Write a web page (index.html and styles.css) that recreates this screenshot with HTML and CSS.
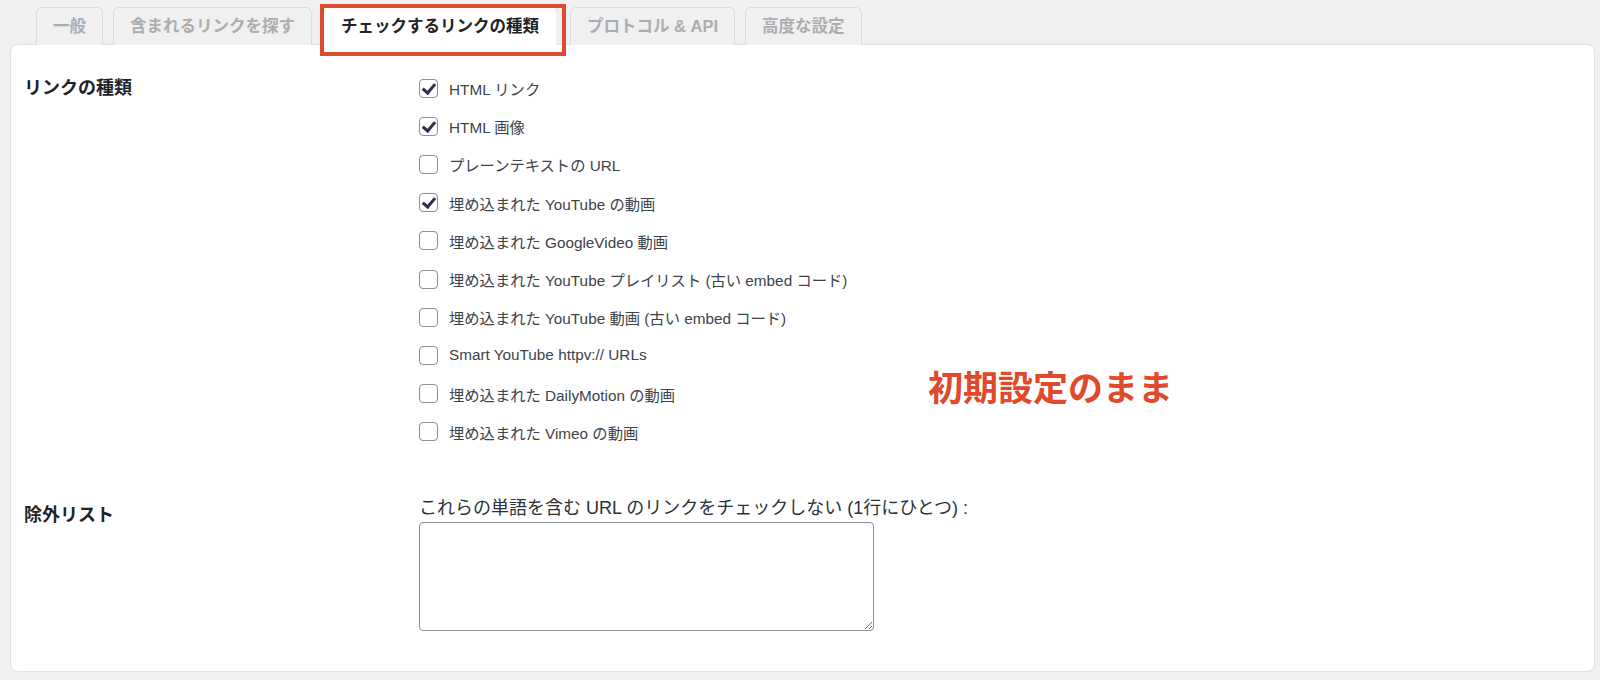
FILE: index.html
```html
<!DOCTYPE html>
<html lang="ja">
<head>
  <meta charset="UTF-8" />
  <meta name="viewport" content="width=device-width, initial-scale=1.0"/>
  <title>チェックするリンクの種類</title>
  <link rel="stylesheet" href="styles.css">
</head>
<body>
  <div class="wrap">
    <nav class="tabs">
      <a href="#" class="tab">一般</a>
      <a href="#" class="tab">含まれるリンクを探す</a>
      <a href="#" class="tab tab-active">チェックするリンクの種類</a>
      <a href="#" class="tab">プロトコル &amp; API</a>
      <a href="#" class="tab">高度な設定</a>
    </nav>

    <div class="panel">
      <div class="row">
        <div class="row-label">リンクの種類</div>
        <div class="options">
          <label class="opt"><input type="checkbox" checked> HTML リンク</label>
          <label class="opt"><input type="checkbox" checked> HTML 画像</label>
          <label class="opt"><input type="checkbox"> プレーンテキストの URL</label>
          <label class="opt"><input type="checkbox" checked> 埋め込まれた YouTube の動画</label>
          <label class="opt"><input type="checkbox"> 埋め込まれた GoogleVideo 動画</label>
          <label class="opt"><input type="checkbox"> 埋め込まれた YouTube プレイリスト (古い embed コード)</label>
          <label class="opt"><input type="checkbox"> 埋め込まれた YouTube 動画 (古い embed コード)</label>
          <label class="opt"><input type="checkbox"> Smart YouTube httpv:// URLs</label>
          <label class="opt"><input type="checkbox"> 埋め込まれた DailyMotion の動画</label>
          <label class="opt"><input type="checkbox"> 埋め込まれた Vimeo の動画</label>
        </div>
      </div>

      <div class="row row-exclude">
        <div class="row-label">除外リスト</div>
        <div class="exclude">
          <p class="exclude-desc">これらの単語を含む URL のリンクをチェックしない (1行にひとつ) :</p>
          <textarea class="exclude-box"></textarea>
        </div>
      </div>

      <div class="note">初期設定のまま</div>
    </div>
  </div>
</body>
</html>
```

FILE: styles.css
```css
* {
  box-sizing: border-box;
  margin: 0;
  padding: 0;
}

body {
  background: #f0f0f1;
  color: #3c434a;
  font-family: 'Liberation Sans', 'Noto Sans CJK JP', sans-serif;
}

.wrap {
  padding: 7px 5px 9px 10px;
}

/* tabs */

.tabs {
  display: flex;
  gap: 10px;
  padding-left: 26px;
  margin-bottom: -1px;
  position: relative;
  z-index: 2;
}

.tab {
  display: block;
  height: 38px;
  line-height: 36px;
  padding: 0 16px;
  border: 1px solid #dcdcde;
  border-bottom: none;
  border-radius: 6px 6px 0 0;
  background: #f0f0f1;
  color: #abaeb1;
  font-size: 16.5px;
  font-weight: 700;
  text-decoration: none;
}

.tab-active {
  position: relative;
  background: #fff;
  color: #1d2327;
  border-color: #fff;
  margin: 0 4px 0 2px;
}

.tab-active::after {
  content: "";
  position: absolute;
  top: -4px;
  left: -5px;
  right: -11px;
  bottom: -11px;
  border: 4px solid #dc4a2f;
}

/* panel */

.panel {
  position: relative;
  background: #fff;
  border: 1px solid #e2e2e4;
  border-radius: 8px;
  padding: 24px 13px 40px;
}

.row {
  display: grid;
  grid-template-columns: 395px 1fr;
}

.row-label {
  line-height: 38px;
  font-size: 18px;
  font-weight: 700;
  color: #1d2327;
}

.options {
  display: flex;
  flex-direction: column;
}

.opt {
  display: flex;
  align-items: center;
  gap: 11px;
  height: 38.2px;
  font-size: 15.3px;
}

.opt input {
  appearance: none;
  -webkit-appearance: none;
  position: relative;
  width: 19px;
  height: 19px;
  border: 1px solid #8c8f94;
  border-radius: 4px;
  background: #fff;
  flex-shrink: 0;
}

.opt input:checked::before {
  content: "";
  position: absolute;
  left: 5px;
  top: 1px;
  width: 5px;
  height: 10px;
  border-right: 3px solid #302f4c;
  border-bottom: 3px solid #302f4c;
  transform: rotate(40deg);
}

.row-exclude {
  margin-top: 45px;
}

.exclude-desc {
  margin-top: 2px;
  line-height: 20px;
  font-size: 18px;
  color: #2c3338;
}

.exclude-box {
  display: block;
  margin-top: 4px;
  width: 455px;
  height: 109px;
  border: 1px solid #8c8f94;
  border-radius: 4px;
  background: #fff;
}

.note {
  position: absolute;
  left: 917px;
  top: 321px;
  line-height: 40px;
  font-size: 35px;
  font-weight: 700;
  color: #e0492b;
  font-family: 'Noto Sans CJK JP', sans-serif;
}
```
